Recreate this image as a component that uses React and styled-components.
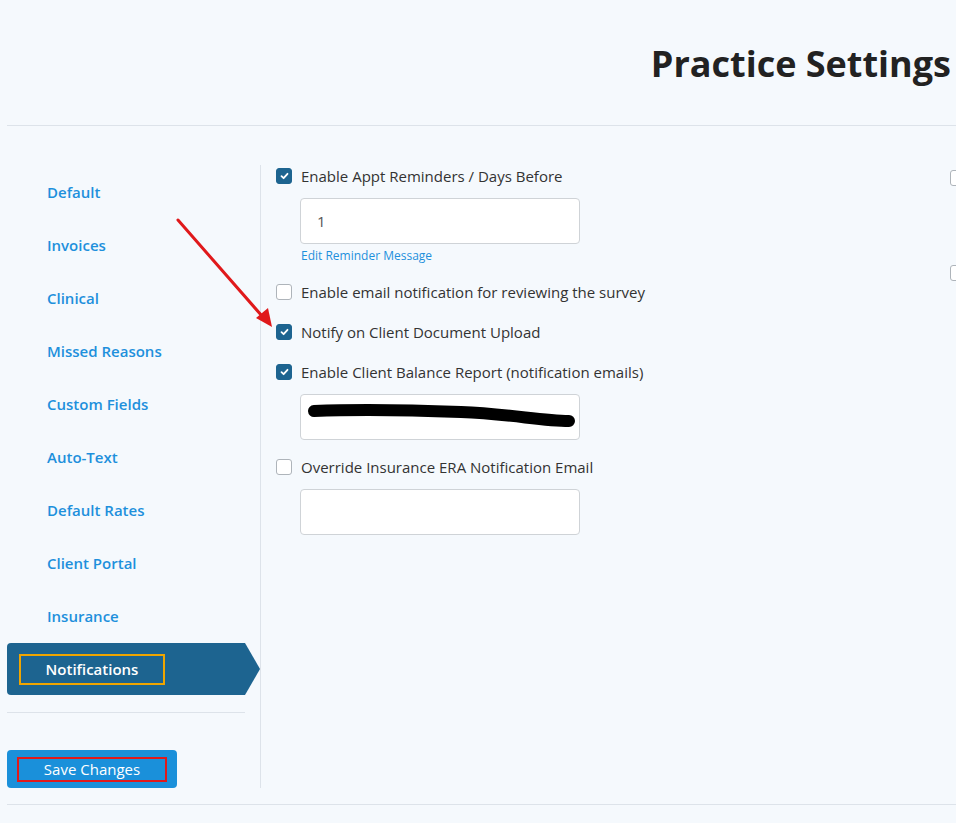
import React from "react";
import styled, { createGlobalStyle } from "styled-components";

const GlobalStyle = createGlobalStyle`
  html, body { margin: 0; padding: 0; background: #f5f9fd; }
  body { font-family: "Open Sans", "Noto Sans", sans-serif; color: #333; }
  * { box-sizing: border-box; }
`;

const Page = styled.div`
  position: relative;
  width: 956px;
  height: 823px;
  overflow: hidden;
  padding-left: 7px;
  background: #f5f9fd;
`;

const Header = styled.header`
  height: 126px;
  border-bottom: 1px solid #dde3ea;
  display: flex;
  justify-content: flex-end;
  align-items: flex-start;
  padding-right: 5px;
`;

const Title = styled.h1`
  margin: 40px 0 0;
  font-size: 36px;
  font-weight: 700;
  color: #222;
  line-height: 48px;
`;

const Body = styled.div`
  display: flex;
  margin-top: 39px;
  padding-bottom: 16px;
  border-bottom: 1px solid #dde3ea;
`;

const Sidebar = styled.nav`
  width: 253px;
  flex: none;
  display: flex;
  flex-direction: column;
`;

const NavItem = styled.div`
  position: relative;
  width: 238px;
  height: 53px;
  display: flex;
  align-items: center;
  padding-left: ${(p) => (p.$active ? "12px" : "40px")};
  font-size: 15px;
  font-weight: 600;
  color: ${(p) => (p.$active ? "#fff" : "#1e90dc")};
  background: ${(p) => (p.$active ? "#1d6490" : "transparent")};
  border-radius: ${(p) => (p.$active ? "4px 0 0 4px" : "0")};
  ${(p) => (p.$active ? "height: 52px; margin-top: 1px;" : "")}
  &::after {
    content: "";
    display: ${(p) => (p.$active ? "block" : "none")};
    position: absolute;
    right: -15px;
    top: 0;
    border-left: 15px solid #1d6490;
    border-top: 26px solid transparent;
    border-bottom: 26px solid transparent;
  }
`;

const Highlight = styled.span`
  display: inline-flex;
  align-items: center;
  justify-content: center;
  width: 146px;
  height: 31px;
  border: 2px solid ${(p) => p.$color};
`;

const Divider = styled.hr`
  width: 238px;
  margin: 17px 0 0;
  border: 0;
  border-top: 1px solid #dde3ea;
`;

const SaveButton = styled.button`
  margin-top: 37px;
  width: 170px;
  height: 38px;
  border: 0;
  border-radius: 4px;
  background: #1a90da;
  display: flex;
  align-items: center;
  justify-content: center;
  padding: 0;
  font-family: inherit;
  font-size: 15px;
  color: #fff;
`;

const SaveLabel = styled.span`
  display: inline-flex;
  align-items: center;
  justify-content: center;
  width: 150px;
  height: 25px;
  border: 2px solid #e0191b;
`;

const Content = styled.section`
  flex: 1;
  display: flex;
  border-left: 1px solid #dde3ea;
  min-height: 623px;
  padding-left: 15px;
`;

const LeftCol = styled.div`
  width: 674px;
  flex: none;
  display: flex;
  flex-direction: column;
`;

const RightCol = styled.div`
  display: flex;
  flex-direction: column;
  padding-top: 5px;
  gap: 79px;
`;

const Row = styled.label`
  display: flex;
  align-items: center;
  gap: 9px;
  height: 20px;
  margin-top: ${(p) => p.$mt || 0}px;
  font-size: 15px;
  color: #333;
`;

const Box = styled.span`
  width: 16px;
  height: 16px;
  flex: none;
  border-radius: 3px;
  display: inline-flex;
  align-items: center;
  justify-content: center;
  background: ${(p) => (p.$checked ? "#1d6490" : "#fff")};
  border: 1px solid ${(p) => (p.$checked ? "#1d6490" : "#aeb4ba")};
`;

const Field = styled.div`
  position: relative;
  width: 280px;
  height: 46px;
  margin-top: ${(p) => p.$mt || 12}px;
  margin-left: 24px;
  background: #fff;
  border: 1px solid #cfd3d7;
  border-radius: 4px;
  display: flex;
  align-items: center;
  padding-left: 16px;
  font-size: 15px;
  color: #555;
`;

const Redact = styled.svg`
  position: absolute;
  left: 0;
  top: 0;
`;

const Link = styled.a`
  margin: 4px 0 0 25px;
  font-size: 12px;
  line-height: 16px;
  color: #1e90dc;
  text-decoration: none;
`;

const Arrow = styled.svg`
  position: absolute;
  left: 0;
  top: 0;
  pointer-events: none;
`;

function Check({ checked }) {
  return (
    <Box $checked={checked}>
      {checked && (
        <svg width="9" height="8" viewBox="0 0 9 8">
          <path d="M1.5 4.2 L3.6 6.2 L7.5 1.8" fill="none" stroke="#fff" strokeWidth="1.8" strokeLinecap="round" strokeLinejoin="round" />
        </svg>
      )}
    </Box>
  );
}

const navItems = [
  "Default",
  "Invoices",
  "Clinical",
  "Missed Reasons",
  "Custom Fields",
  "Auto-Text",
  "Default Rates",
  "Client Portal",
  "Insurance",
];

export default function App() {
  return (
    <>
      <GlobalStyle />
      <Page>
        <Header>
          <Title>Practice Settings</Title>
        </Header>
        <Body>
          <Sidebar>
            {navItems.map((n) => (
              <NavItem key={n}>{n}</NavItem>
            ))}
            <NavItem $active>
              <Highlight $color="#f0a500">Notifications</Highlight>
            </NavItem>
            <Divider />
            <SaveButton>
              <SaveLabel>Save Changes</SaveLabel>
            </SaveButton>
          </Sidebar>
          <Content>
            <LeftCol>
              <Row $mt={1}>
                <Check checked />
                Enable Appt Reminders / Days Before
              </Row>
              <Field>1</Field>
              <Link href="#">Edit Reminder Message</Link>
              <Row $mt={18}>
                <Check />
                Enable email notification for reviewing the survey
              </Row>
              <Row $mt={20}>
                <Check checked />
                Notify on Client Document Upload
              </Row>
              <Row $mt={20}>
                <Check checked />
                Enable Client Balance Report (notification emails)
              </Row>
              <Field>
                <Redact width="280" height="46" viewBox="0 0 280 46">
                  <path d="M13 16 C60 14, 110 15, 160 17 S240 26, 268 26" fill="none" stroke="#000" strokeWidth="12" strokeLinecap="round" />
                </Redact>
              </Field>
              <Row $mt={17}>
                <Check />
                Override Insurance ERA Notification Email
              </Row>
              <Field />
            </LeftCol>
            <RightCol>
              <Check />
              <Check />
            </RightCol>
          </Content>
        </Body>
        <Arrow width="956" height="823" viewBox="0 0 956 823">
          <line x1="178" y1="220" x2="262" y2="316" stroke="#e0191b" strokeWidth="3" strokeLinecap="round" />
          <polygon points="272,327 256,318 268,308" fill="#e0191b" />
        </Arrow>
      </Page>
    </>
  );
}
